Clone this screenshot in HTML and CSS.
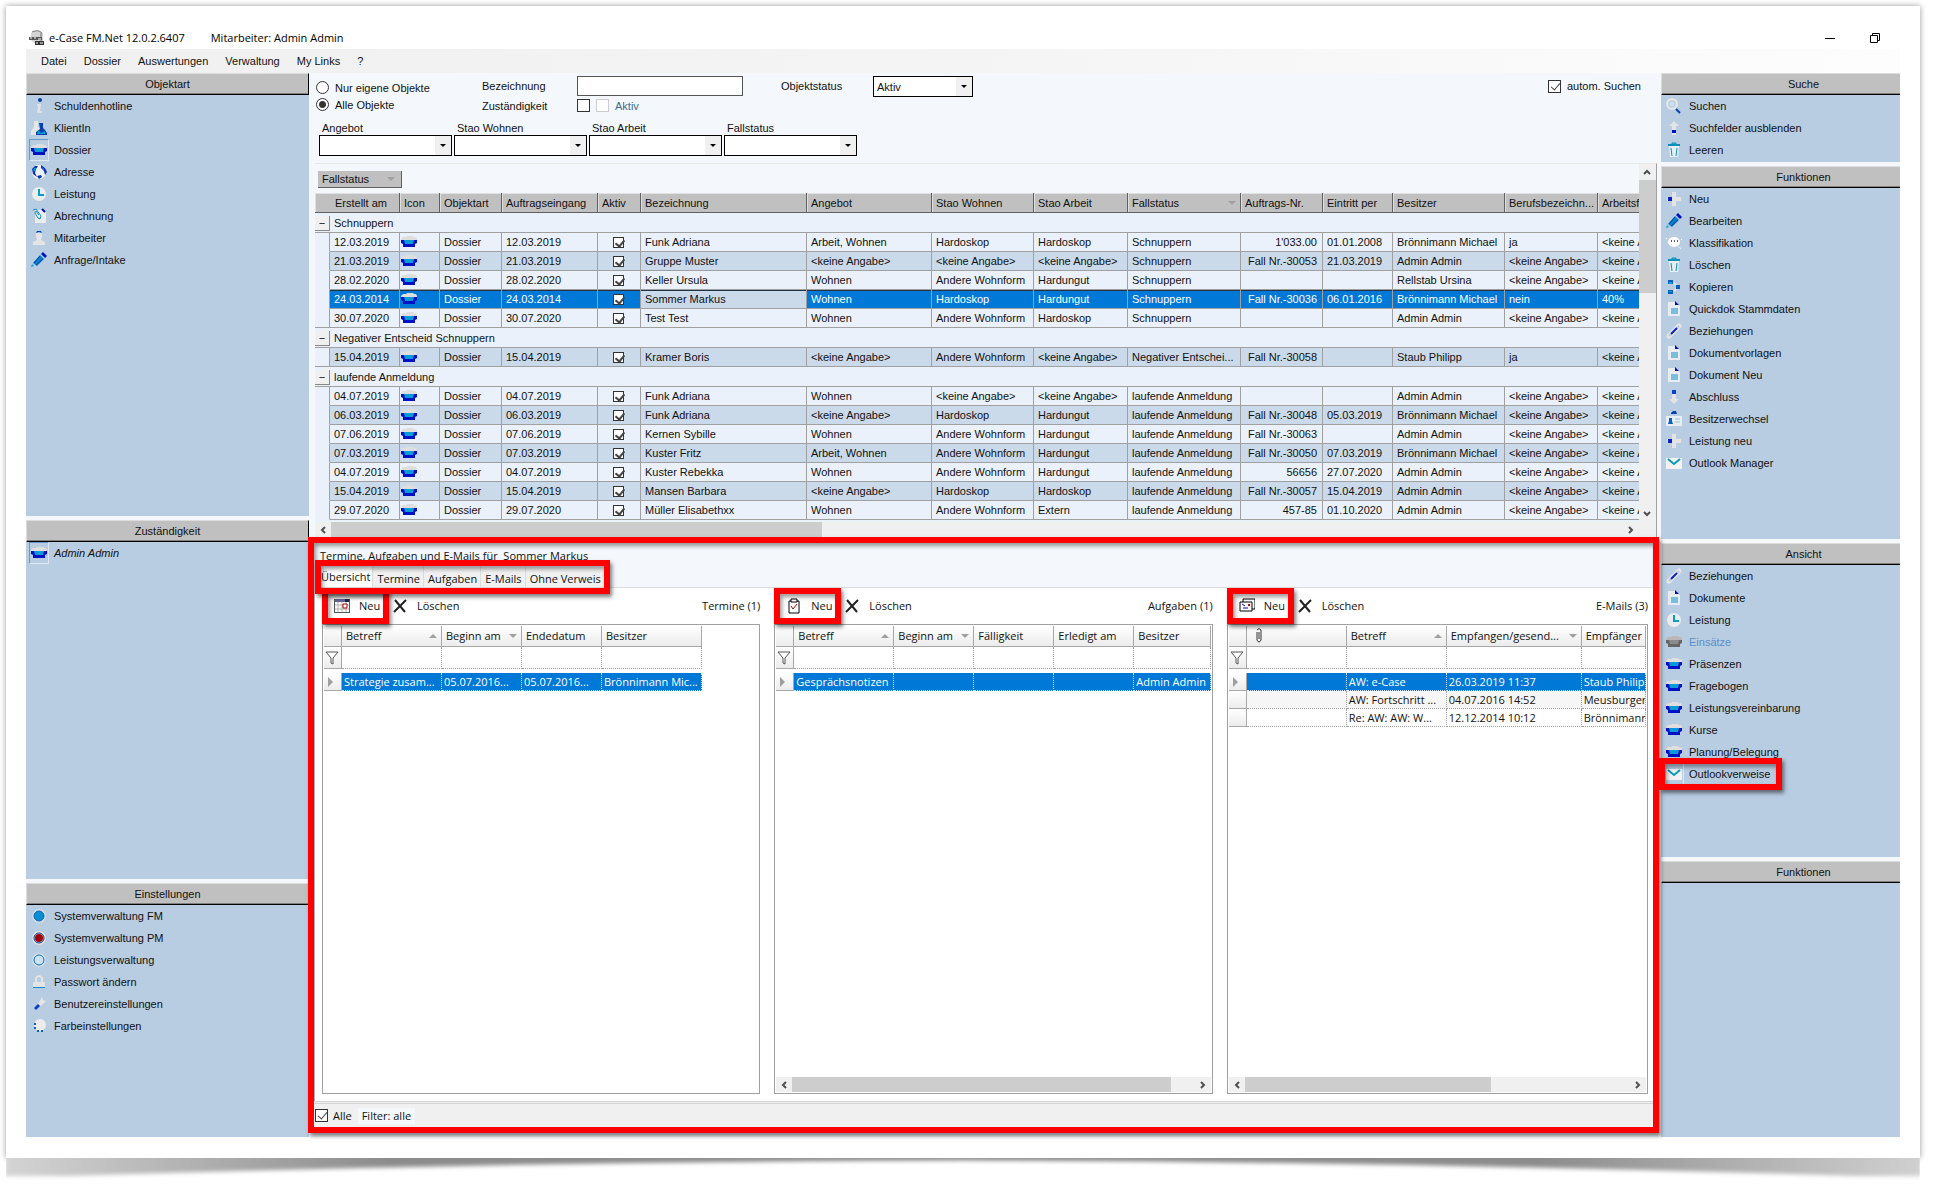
FILE: index.html
```
<!DOCTYPE html>
<html lang="de">
  <head>
    <meta charset="utf-8">
    <title>e-Case FM.Net</title>
    <meta name="viewport" content="width=device-width, initial-scale=1">
    <link rel="stylesheet" href="styles.css">
  </head>
  <body>
    <!-- icon set, all 16x16 -->
    <svg class="sprite" width="0" height="0" aria-hidden="true">
      <symbol id="i-info" viewBox="0 0 16 16"><circle cx="9" cy="2" r="2" fill="#0a3fb0"/><path d="M6 6h4L9 13h2v2H6l1-7H6z" fill="#dfe3e8"/></symbol>
      <symbol id="i-client" viewBox="0 0 16 16"><path d="M3 1h4v5l2 3v6H0v-4l3-4z" fill="#e6e6e6"/><path d="M8 3h4v5l2 2 2 3v2H5v-3l4-3z" fill="#0a3fb0"/><path d="M7 10l3 3 4-2v3H6z" fill="#00a0d8"/></symbol>
      <symbol id="i-box" viewBox="0 0 16 16"><path d="M0 5l2-2h3l1-1h6l1 1h2l1 2v2H0z" fill="#dedede"/><path d="M0 6h16v3l-2 1v3H2v-3L0 9z" fill="#0010c4"/><path d="M3 6h10l-1 4H4z" fill="#0a9ad6"/></symbol>
      <symbol id="i-boxgrey" viewBox="0 0 16 16"><path d="M0 5l2-2h3l1-1h6l1 1h2l1 2v2H0z" fill="#b8b8b8"/><path d="M0 6h16v3l-2 1v3H2v-3L0 9z" fill="#666"/><path d="M3 6h10l-1 4H4z" fill="#8c8c8c"/></symbol>
      <symbol id="i-globe" viewBox="0 0 16 16"><circle cx="8" cy="8" r="7" fill="#eef2f5"/><path d="M1 5l3-3h3L5 5 4 9l2 4-4-3zM10 1l4 3 2 4-2 3-1-4-3-3zM6 12l4-1 1 2-3 2z" fill="#0a30b8"/><path d="M3 4l2 0-1 3-2 0zM11 3l2 2v2z" fill="#00a0d8"/></symbol>
      <symbol id="i-clock" viewBox="0 0 16 16"><circle cx="8" cy="8" r="7" fill="#ececec"/><path d="M7 3h2v5h4v2H7z" fill="#00a0c8"/></symbol>
      <symbol id="i-bill" viewBox="0 0 16 16"><path d="M4 2h8l3 3v10H4z" fill="#ececec"/><path d="M2 2l3-1 5 7-1 3-2-1-3-5 1-2 3 4" fill="none" stroke="#0a90c8"/><path d="M11 1l3 3" stroke="#0010a0" stroke-width="2"/></symbol>
      <symbol id="i-staff" viewBox="0 0 16 16"><path d="M5 3h6v4l-1 3 4 2v3H2v-3l4-2-1-3z" fill="#e4e4e4"/><path d="M5 3l1-2h4l1 2-3-1z" fill="#0a3fb0"/></symbol>
      <symbol id="i-pencil" viewBox="0 0 16 16"><path d="M2 11l7-8 4 4-7 7z" fill="#0a80c8"/><path d="M3 11l6-7M5 13l7-6" stroke="#0040b0" fill="none"/><path d="M10 2l2-2 4 4-2 2z" fill="#0010c4"/><path d="M0 15l1-3 2 2z" fill="#00a0d8"/></symbol>
      <symbol id="i-search" viewBox="0 0 16 16"><circle cx="6" cy="6" r="5" fill="#cfe2f2" stroke="#e6e6e6" stroke-width="2"/><circle cx="6" cy="6" r="3" fill="none" stroke="#b4c4d0"/><path d="M10 11l4 4" stroke="#0a3fb0" stroke-width="2"/></symbol>
      <symbol id="i-up" viewBox="0 0 16 16"><path d="M8 1l5 5h-3v9H6V6H3z" fill="#e4e4e4"/><path d="M6 10h4v3H6z" fill="#0010c4"/></symbol>
      <symbol id="i-down" viewBox="0 0 16 16"><path d="M8 15l5-5h-3V1H6v9H3z" fill="#e4e4e4"/><path d="M6 1h4v4H6z" fill="#0a3fd0"/></symbol>
      <symbol id="i-trash" viewBox="0 0 16 16"><path d="M3 4h10l-1 11H4z" fill="#e8eef2"/><path d="M2 2h12v2H2z" fill="#0a90b8"/><path d="M6 1h4v1H6zM5 6l1 8M11 6l-1 8" stroke="#0a90b8" fill="none"/></symbol>
      <symbol id="i-plus" viewBox="0 0 16 16"><path d="M6 1h4v5h5v4h-5v5H6v-5H1V6h5z" fill="#e4e4e4"/><path d="M2 6h4v4H2z" fill="#0a20c4"/></symbol>
      <symbol id="i-bubble" viewBox="0 0 16 16"><ellipse cx="8" cy="7" rx="6" ry="5" fill="#fff"/><path d="M5 6h1M8 6h1M11 6h1" stroke="#557" stroke-width="2"/><path d="M11 11l4 2v1zM0 3h1v1H0zM15 4h1v1h-1z" fill="#fff"/></symbol>
      <symbol id="i-copy" viewBox="0 0 16 16"><path d="M2 1h5v4H2zM2 11h5v4H2zM10 6h4v4h-4z" fill="#0a60c0"/><path d="M8 4l2 2M8 12l2-2" stroke="#e8e8e8" stroke-width="2"/><path d="M3 3h3v2H3zM3 12h3v1H3z" fill="#00a0d8"/></symbol>
      <symbol id="i-doc" viewBox="0 0 16 16"><path d="M2 1h8l4 4v10H2z" fill="#e8ecf0"/><path d="M9 0l4 4H9z" fill="#0010a0"/><path d="M5 8h7M5 10h7M5 12h7" stroke="#0a90c8"/></symbol>
      <symbol id="i-link" viewBox="0 0 16 16"><path d="M3 13l4-4M9 7l4-4" stroke="#e6e6e6" stroke-width="5" stroke-linecap="round"/><path d="M3 13l2-2M11 5l2-2" stroke="#b8cce0" stroke-width="2"/><path d="M5 11l6-6" stroke="#0a20c4" stroke-width="2"/></symbol>
      <symbol id="i-owner" viewBox="0 0 16 16"><path d="M0 5h16v10H0z" fill="#e8eef2"/><path d="M5 2l2-2h3l1 3H5z" fill="#0a3fb0"/><path d="M3 7h3v3l1 3H2l1-3z" fill="#0a60c0"/><path d="M9 8h5M9 11h5" stroke="#8fc4e0"/></symbol>
      <symbol id="i-mail" viewBox="0 0 16 16"><path d="M0 3h16v11H0z" fill="#f2f2f2"/><path d="M2 4l6 5 6-5" fill="none" stroke="#0a9ab8" stroke-width="2"/></symbol>
      <symbol id="i-disc" viewBox="0 0 16 16"><circle cx="8" cy="8" r="7" fill="#d4dfea"/><circle cx="8" cy="8" r="5" fill="#0a90d0" stroke="#0a60c0"/></symbol>
      <symbol id="i-discred" viewBox="0 0 16 16"><circle cx="8" cy="8" r="7" fill="#e0e0e0"/><circle cx="8" cy="8" r="5" fill="#cfe2f2" stroke="#0a3f90"/><circle cx="8" cy="8" r="4" fill="#a00000"/></symbol>
      <symbol id="i-ring" viewBox="0 0 16 16"><circle cx="8" cy="8" r="7" fill="#d4dfea"/><circle cx="8" cy="8" r="5" fill="#cfe2f2" stroke="#0a70c0"/></symbol>
      <symbol id="i-lock" viewBox="0 0 16 16"><path d="M5 8V4q3-4 6 0v4" fill="none" stroke="#e4e4e4" stroke-width="2"/><path d="M2 8h12v5H2z" fill="#e4e4e4"/><path d="M2 13h12v1H2z" fill="#0a90c8"/></symbol>
      <symbol id="i-tool" viewBox="0 0 16 16"><path d="M7 8l4-7 1 3 3 1-5 5z" fill="#e4e4e4"/><path d="M3 12l4-4 2 2-4 4z" fill="#0a40c0"/></symbol>
      <symbol id="i-palette" viewBox="0 0 16 16"><circle cx="9" cy="7" r="6" fill="#ececec"/><path d="M3 5h2v2H3zM3 9h2v2H3zM6 12h2v2H6zM10 12h2v2h-2z" fill="#0a60c0"/></symbol>
      <symbol id="i-cal" viewBox="0 0 16 16"><path d="M0 1h16v14H0z" fill="#fff"/><path d="M4 4v11M8 4v11M12 4v11M0 7h16M0 11h16" stroke="#b0b0b0" fill="none"/><path d="M0 1h16v3H0z" fill="#669"/><path d="M11 1h5v3h-5z" fill="#224"/><path d="M0 14h16v1H0zM15 1h1v14h-1zM0 1h1v14H0z" fill="#555"/><path d="M9 6h4v4H9z" fill="#fff" stroke="#b00000"/></symbol>
      <symbol id="i-task" viewBox="0 0 16 16"><path d="M3 3h10v12H3z" fill="#fff" stroke="#000"/><path d="M5 1h6v3H5z" fill="#fff" stroke="#000"/><path d="M5 8l2 3 4-5" fill="none" stroke="#a00000"/></symbol>
      <symbol id="i-mails" viewBox="0 0 16 16"><path d="M4 1h12v10H4z" fill="#fff" stroke="#000"/><path d="M1 4h12v9H1z" fill="#fff" stroke="#000"/><path d="M3 6l3 2M4 10h5" stroke="#00c"/><path d="M9 6h2v2H9z" fill="#c00"/></symbol>
      <symbol id="i-x" viewBox="0 0 16 16"><path d="M3 2l10 12M14 2L2 14" stroke="#222" stroke-width="2"/></symbol>
      <symbol id="i-filter" viewBox="0 0 16 16"><path d="M2 2h12L9 8v6l-2-1V8z" fill="#fff" stroke="#555"/></symbol>
      <symbol id="i-clip" viewBox="0 0 16 16"><path d="M6 4v8q2 4 4 0V2Q8-1 6 2M8 4v7" fill="none" stroke="#333"/></symbol>
      <symbol id="i-chev" viewBox="0 0 16 16"><path d="M10 5L7 8l3 3" fill="none" stroke="#505050" stroke-width="2"/></symbol>
      <symbol id="i-app" viewBox="0 0 16 16"><path d="M2 3q6-5 12 0v12H8l-6-5z" fill="#d4d4d4"/><path d="M3 2q6-3 10 1M12 3v12" stroke="#777" fill="none"/><path d="M0 7h13v3H0z" fill="#555"/><path d="M1 8h2M5 8h2M9 9h3" stroke="#fff"/><path d="M6 11h9v4H6z" fill="#333"/><path d="M7 13h2M11 13h3" stroke="#fff"/></symbol>
    </svg>

    <div class="sheet">
      <header class="titlebar">
        <svg class="icon"><use href="#i-app"/></svg>
        <span class="app-name">e-Case FM.Net 12.0.2.6407</span>
        <span>Mitarbeiter: Admin Admin</span>
        <span class="window-buttons">
          <button type="button" aria-label="Minimieren"><svg viewBox="0 0 12 12"><path d="M1 6.500h10" stroke="#000"/></svg></button>
          <button type="button" aria-label="Wiederherstellen"><svg viewBox="0 0 12 12"><path d="M1.500 3.500h7v7h-7zM3.500 3V1.500h7v7H9" fill="none" stroke="#000"/></svg></button>
        </span>
      </header>
      <nav class="menubar">
        <a href="#">Datei</a>
        <a href="#">Dossier</a>
        <a href="#">Auswertungen</a>
        <a href="#">Verwaltung</a>
        <a href="#">My Links</a>
        <a href="#">?</a>
      </nav>

      <div class="workspace">
        <aside class="side side-left">
          <section class="panel panel-types">
            <h2>Objektart</h2>
            <ul>
              <li><a href="#"><svg class="icon"><use href="#i-info"/></svg>Schuldenhotline</a></li>
              <li><a href="#"><svg class="icon"><use href="#i-client"/></svg>KlientIn</a></li>
              <li><a href="#" class="current"><svg class="icon"><use href="#i-box"/></svg>Dossier</a></li>
              <li><a href="#"><svg class="icon"><use href="#i-globe"/></svg>Adresse</a></li>
              <li><a href="#"><svg class="icon"><use href="#i-clock"/></svg>Leistung</a></li>
              <li><a href="#"><svg class="icon"><use href="#i-bill"/></svg>Abrechnung</a></li>
              <li><a href="#"><svg class="icon"><use href="#i-staff"/></svg>Mitarbeiter</a></li>
              <li><a href="#"><svg class="icon"><use href="#i-pencil"/></svg>Anfrage/Intake</a></li>
            </ul>
          </section>
          <section class="panel panel-owner">
            <h2>Zuständigkeit</h2>
            <ul>
              <li><a href="#" class="current owner"><svg class="icon"><use href="#i-box"/></svg>Admin Admin</a></li>
            </ul>
          </section>
          <section class="panel panel-settings">
            <h2>Einstellungen</h2>
            <ul>
              <li><a href="#"><svg class="icon"><use href="#i-disc"/></svg>Systemverwaltung FM</a></li>
              <li><a href="#"><svg class="icon"><use href="#i-discred"/></svg>Systemverwaltung PM</a></li>
              <li><a href="#"><svg class="icon"><use href="#i-ring"/></svg>Leistungsverwaltung</a></li>
              <li><a href="#"><svg class="icon"><use href="#i-lock"/></svg>Passwort ändern</a></li>
              <li><a href="#"><svg class="icon"><use href="#i-tool"/></svg>Benutzereinstellungen</a></li>
              <li><a href="#"><svg class="icon"><use href="#i-palette"/></svg>Farbeinstellungen</a></li>
            </ul>
          </section>
        </aside>

        <main class="center">
          <form class="search">
            <div class="search-top">
              <div class="scope">
                <label><input type="radio" name="scope">Nur eigene Objekte</label>
                <label><input type="radio" name="scope" checked>Alle Objekte</label>
              </div>
              <div class="fields">
                <label for="bez">Bezeichnung</label>
                <input type="text" id="bez">
                <label for="zust">Zuständigkeit</label>
                <span class="checks">
                  <input type="checkbox" id="zust">
                  <label class="muted"><input type="checkbox" disabled>Aktiv</label>
                </span>
              </div>
              <label class="status-label" for="status">Objektstatus</label>
              <span class="select select-status"><select id="status"><option>Aktiv</option></select></span>
              <label class="auto"><input type="checkbox" checked>autom. Suchen</label>
            </div>
            <div class="search-bottom">
              <label>Angebot<span class="select"><select><option></option></select></span></label>
              <label>Stao Wohnen<span class="select"><select><option></option></select></span></label>
              <label>Stao Arbeit<span class="select"><select><option></option></select></span></label>
              <label>Fallstatus<span class="select"><select><option></option></select></span></label>
            </div>
          </form>

          <section class="list">
            <div class="list-view">
              <div class="group-by"><button type="button">Fallstatus<i class="sort down"></i></button></div>
              <table class="cases">
                <colgroup>
                  <col class="w-ind"><col class="w-date"><col class="w-icon"><col class="w-type"><col class="w-entry"><col class="w-act"><col class="w-name"><col class="w-offer"><col class="w-live"><col class="w-work"><col class="w-state"><col class="w-no"><col class="w-date"><col class="w-owner"><col class="w-job"><col>
                </colgroup>
                <thead>
                  <tr><th colspan="2" class="first">Erstellt am</th><th>Icon</th><th>Objektart</th><th>Auftragseingang</th><th>Aktiv</th><th>Bezeichnung</th><th>Angebot</th><th>Stao Wohnen</th><th>Stao Arbeit</th><th>Fallstatus<i class="sort down"></i></th><th>Auftrags-Nr.</th><th>Eintritt per</th><th>Besitzer</th><th>Berufsbezeichn...</th><th>Arbeitsf</th></tr>
                </thead>
                <tbody>
                  <tr class="group"><td colspan="16"><button type="button">−</button>Schnuppern</td></tr>
                  <tr><td></td><td>12.03.2019</td><td><svg class="icon"><use href="#i-box"/></svg></td><td>Dossier</td><td>12.03.2019</td><td><input type="checkbox" checked></td><td>Funk Adriana</td><td>Arbeit, Wohnen</td><td>Hardoskop</td><td>Hardoskop</td><td>Schnuppern</td><td>1'033.00</td><td>01.01.2008</td><td>Brönnimann Michael</td><td>ja</td><td>&lt;keine Angabe&gt;</td></tr>
                  <tr class="alt"><td></td><td>21.03.2019</td><td><svg class="icon"><use href="#i-box"/></svg></td><td>Dossier</td><td>21.03.2019</td><td><input type="checkbox" checked></td><td>Gruppe Muster</td><td>&lt;keine Angabe&gt;</td><td>&lt;keine Angabe&gt;</td><td>&lt;keine Angabe&gt;</td><td>Schnuppern</td><td>Fall Nr.-30053</td><td>21.03.2019</td><td>Admin Admin</td><td>&lt;keine Angabe&gt;</td><td>&lt;keine Angabe&gt;</td></tr>
                  <tr><td></td><td>28.02.2020</td><td><svg class="icon"><use href="#i-box"/></svg></td><td>Dossier</td><td>28.02.2020</td><td><input type="checkbox" checked></td><td>Keller Ursula</td><td>Wohnen</td><td>Andere Wohnform</td><td>Hardungut</td><td>Schnuppern</td><td></td><td></td><td>Rellstab Ursina</td><td>&lt;keine Angabe&gt;</td><td>&lt;keine Angabe&gt;</td></tr>
                  <tr class="selected"><td></td><td>24.03.2014</td><td><svg class="icon"><use href="#i-box"/></svg></td><td>Dossier</td><td>24.03.2014</td><td><input type="checkbox" checked></td><td class="active-cell">Sommer Markus</td><td>Wohnen</td><td>Hardoskop</td><td>Hardungut</td><td>Schnuppern</td><td>Fall Nr.-30036</td><td>06.01.2016</td><td>Brönnimann Michael</td><td>nein</td><td>40%</td></tr>
                  <tr class="last"><td></td><td>30.07.2020</td><td><svg class="icon"><use href="#i-box"/></svg></td><td>Dossier</td><td>30.07.2020</td><td><input type="checkbox" checked></td><td>Test Test</td><td>Wohnen</td><td>Andere Wohnform</td><td>Hardoskop</td><td>Schnuppern</td><td></td><td></td><td>Admin Admin</td><td>&lt;keine Angabe&gt;</td><td>&lt;keine Angabe&gt;</td></tr>
                  <tr class="group"><td colspan="16"><button type="button">−</button>Negativer Entscheid Schnuppern</td></tr>
                  <tr class="alt last"><td></td><td>15.04.2019</td><td><svg class="icon"><use href="#i-box"/></svg></td><td>Dossier</td><td>15.04.2019</td><td><input type="checkbox" checked></td><td>Kramer Boris</td><td>&lt;keine Angabe&gt;</td><td>Andere Wohnform</td><td>&lt;keine Angabe&gt;</td><td>Negativer Entschei...</td><td>Fall Nr.-30058</td><td></td><td>Staub Philipp</td><td>ja</td><td>&lt;keine Angabe&gt;</td></tr>
                  <tr class="group"><td colspan="16"><button type="button">−</button>laufende Anmeldung</td></tr>
                  <tr><td></td><td>04.07.2019</td><td><svg class="icon"><use href="#i-box"/></svg></td><td>Dossier</td><td>04.07.2019</td><td><input type="checkbox" checked></td><td>Funk Adriana</td><td>Wohnen</td><td>&lt;keine Angabe&gt;</td><td>&lt;keine Angabe&gt;</td><td>laufende Anmeldung</td><td></td><td></td><td>Admin Admin</td><td>&lt;keine Angabe&gt;</td><td>&lt;keine Angabe&gt;</td></tr>
                  <tr class="alt"><td></td><td>06.03.2019</td><td><svg class="icon"><use href="#i-box"/></svg></td><td>Dossier</td><td>06.03.2019</td><td><input type="checkbox" checked></td><td>Funk Adriana</td><td>&lt;keine Angabe&gt;</td><td>Hardoskop</td><td>Hardungut</td><td>laufende Anmeldung</td><td>Fall Nr.-30048</td><td>05.03.2019</td><td>Brönnimann Michael</td><td>&lt;keine Angabe&gt;</td><td>&lt;keine Angabe&gt;</td></tr>
                  <tr><td></td><td>07.06.2019</td><td><svg class="icon"><use href="#i-box"/></svg></td><td>Dossier</td><td>07.06.2019</td><td><input type="checkbox" checked></td><td>Kernen Sybille</td><td>Wohnen</td><td>Andere Wohnform</td><td>Hardungut</td><td>laufende Anmeldung</td><td>Fall Nr.-30063</td><td></td><td>Admin Admin</td><td>&lt;keine Angabe&gt;</td><td>&lt;keine Angabe&gt;</td></tr>
                  <tr class="alt"><td></td><td>07.03.2019</td><td><svg class="icon"><use href="#i-box"/></svg></td><td>Dossier</td><td>07.03.2019</td><td><input type="checkbox" checked></td><td>Kuster Fritz</td><td>Arbeit, Wohnen</td><td>Andere Wohnform</td><td>Hardungut</td><td>laufende Anmeldung</td><td>Fall Nr.-30050</td><td>07.03.2019</td><td>Brönnimann Michael</td><td>&lt;keine Angabe&gt;</td><td>&lt;keine Angabe&gt;</td></tr>
                  <tr><td></td><td>04.07.2019</td><td><svg class="icon"><use href="#i-box"/></svg></td><td>Dossier</td><td>04.07.2019</td><td><input type="checkbox" checked></td><td>Kuster Rebekka</td><td>Wohnen</td><td>Andere Wohnform</td><td>Hardungut</td><td>laufende Anmeldung</td><td>56656</td><td>27.07.2020</td><td>Admin Admin</td><td>&lt;keine Angabe&gt;</td><td>&lt;keine Angabe&gt;</td></tr>
                  <tr class="alt"><td></td><td>15.04.2019</td><td><svg class="icon"><use href="#i-box"/></svg></td><td>Dossier</td><td>15.04.2019</td><td><input type="checkbox" checked></td><td>Mansen Barbara</td><td>&lt;keine Angabe&gt;</td><td>Hardoskop</td><td>Hardoskop</td><td>laufende Anmeldung</td><td>Fall Nr.-30057</td><td>15.04.2019</td><td>Admin Admin</td><td>&lt;keine Angabe&gt;</td><td>&lt;keine Angabe&gt;</td></tr>
                  <tr><td></td><td>29.07.2020</td><td><svg class="icon"><use href="#i-box"/></svg></td><td>Dossier</td><td>29.07.2020</td><td><input type="checkbox" checked></td><td>Müller Elisabethxx</td><td>Wohnen</td><td>Andere Wohnform</td><td>Extern</td><td>laufende Anmeldung</td><td>457-85</td><td>01.10.2020</td><td>Admin Admin</td><td>&lt;keine Angabe&gt;</td><td>&lt;keine Angabe&gt;</td></tr>
                </tbody>
              </table>
            </div>
            <div class="vscroll"><svg class="icon up"><use href="#i-chev"/></svg><span class="thumb"></span><svg class="icon dn"><use href="#i-chev"/></svg></div>
            <div class="hscroll hscroll-list"><svg class="icon"><use href="#i-chev"/></svg><span class="track"><span class="thumb"></span></span><svg class="icon rt"><use href="#i-chev"/></svg></div>
          </section>

          <section class="details">
            <h3>Termine, Aufgaben und E-Mails für&nbsp; Sommer Markus</h3>
            <div class="tabs mark" role="tablist">
              <button type="button" class="tab on">Übersicht</button>
              <button type="button" class="tab">Termine</button>
              <button type="button" class="tab">Aufgaben</button>
              <button type="button" class="tab">E-Mails</button>
              <button type="button" class="tab">Ohne Verweis</button>
            </div>
            <div class="page">
              <section class="box">
                <div class="toolbar">
                  <button type="button" class="new mark"><svg class="icon"><use href="#i-cal"/></svg>Neu</button>
                  <button type="button" class="delete"><svg class="icon"><use href="#i-x"/></svg>Löschen</button>
                  <span class="count">Termine (1)</span>
                </div>
                <div class="box-body">
                  <table class="mini mini-dates">
                    <colgroup><col class="m-ind"><col class="m-subj"><col class="m-date"><col class="m-date"><col class="m-subj"></colgroup>
                    <thead>
                      <tr><th></th><th>Betreff<i class="sort"></i></th><th>Beginn am<i class="sort down"></i></th><th>Endedatum</th><th>Besitzer</th></tr>
                      <tr class="filter"><th><svg class="icon"><use href="#i-filter"/></svg></th><td></td><td></td><td></td><td></td></tr>
                    </thead>
                    <tbody>
                      <tr class="selected"><th><i class="play"></i></th><td>Strategie zusam...</td><td>05.07.2016...</td><td>05.07.2016...</td><td>Brönnimann Mic...</td></tr>
                    </tbody>
                  </table>
                </div>
              </section>
              <section class="box">
                <div class="toolbar">
                  <button type="button" class="new mark"><svg class="icon"><use href="#i-task"/></svg>Neu</button>
                  <button type="button" class="delete"><svg class="icon"><use href="#i-x"/></svg>Löschen</button>
                  <span class="count">Aufgaben (1)</span>
                </div>
                <div class="box-body">
                  <table class="mini">
                    <colgroup><col class="m-ind"><col class="m-subj"><col class="m-date"><col class="m-date"><col class="m-date"><col></colgroup>
                    <thead>
                      <tr><th></th><th>Betreff<i class="sort"></i></th><th>Beginn am<i class="sort down"></i></th><th>Fälligkeit</th><th>Erledigt am</th><th>Besitzer</th></tr>
                      <tr class="filter"><th><svg class="icon"><use href="#i-filter"/></svg></th><td></td><td></td><td></td><td></td><td></td></tr>
                    </thead>
                    <tbody>
                      <tr class="selected"><th><i class="play"></i></th><td>Gesprächsnotizen</td><td></td><td></td><td></td><td>Admin Admin</td></tr>
                    </tbody>
                  </table>
                  <div class="hscroll hscroll-tasks"><svg class="icon"><use href="#i-chev"/></svg><span class="track"><span class="thumb"></span></span><svg class="icon rt"><use href="#i-chev"/></svg></div>
                </div>
              </section>
              <section class="box">
                <div class="toolbar">
                  <button type="button" class="new mark"><svg class="icon"><use href="#i-mails"/></svg>Neu</button>
                  <button type="button" class="delete"><svg class="icon"><use href="#i-x"/></svg>Löschen</button>
                  <span class="count">E-Mails (3)</span>
                </div>
                <div class="box-body">
                  <table class="mini">
                    <colgroup><col class="m-ind"><col class="m-subj"><col class="m-subj"><col class="m-sent"><col></colgroup>
                    <thead>
                      <tr><th></th><th><svg class="icon"><use href="#i-clip"/></svg></th><th>Betreff<i class="sort"></i></th><th>Empfangen/gesend...<i class="sort down"></i></th><th>Empfänger</th></tr>
                      <tr class="filter"><th><svg class="icon"><use href="#i-filter"/></svg></th><td></td><td></td><td></td><td></td></tr>
                    </thead>
                    <tbody>
                      <tr class="selected"><th><i class="play"></i></th><td></td><td>AW: e-Case</td><td>26.03.2019 11:37</td><td>Staub Philipp</td></tr>
                      <tr class="odd"><th></th><td></td><td>AW: Fortschritt ...</td><td>04.07.2016 14:52</td><td>Meusburger E</td></tr>
                      <tr><th></th><td></td><td>Re: AW: AW: W...</td><td>12.12.2014 10:12</td><td>Brönnimann M</td></tr>
                    </tbody>
                  </table>
                  <div class="hscroll hscroll-mails"><svg class="icon"><use href="#i-chev"/></svg><span class="track"><span class="thumb"></span></span><svg class="icon rt"><use href="#i-chev"/></svg></div>
                </div>
              </section>
            </div>
            <footer class="statusbar">
              <label><input type="checkbox" checked>Alle</label>
              <span>Filter: alle</span>
            </footer>
          </section>
        </main>

        <aside class="side side-right">
          <section class="panel panel-search">
            <h2>Suche</h2>
            <ul>
              <li><a href="#"><svg class="icon"><use href="#i-search"/></svg>Suchen</a></li>
              <li><a href="#"><svg class="icon"><use href="#i-up"/></svg>Suchfelder ausblenden</a></li>
              <li><a href="#"><svg class="icon"><use href="#i-trash"/></svg>Leeren</a></li>
            </ul>
          </section>
          <section class="panel panel-actions">
            <h2>Funktionen</h2>
            <ul>
              <li><a href="#"><svg class="icon"><use href="#i-plus"/></svg>Neu</a></li>
              <li><a href="#"><svg class="icon"><use href="#i-pencil"/></svg>Bearbeiten</a></li>
              <li><a href="#"><svg class="icon"><use href="#i-bubble"/></svg>Klassifikation</a></li>
              <li><a href="#"><svg class="icon"><use href="#i-trash"/></svg>Löschen</a></li>
              <li><a href="#"><svg class="icon"><use href="#i-copy"/></svg>Kopieren</a></li>
              <li><a href="#"><svg class="icon"><use href="#i-doc"/></svg>Quickdok Stammdaten</a></li>
              <li><a href="#"><svg class="icon"><use href="#i-link"/></svg>Beziehungen</a></li>
              <li><a href="#"><svg class="icon"><use href="#i-doc"/></svg>Dokumentvorlagen</a></li>
              <li><a href="#"><svg class="icon"><use href="#i-doc"/></svg>Dokument Neu</a></li>
              <li><a href="#"><svg class="icon"><use href="#i-down"/></svg>Abschluss</a></li>
              <li><a href="#"><svg class="icon"><use href="#i-owner"/></svg>Besitzerwechsel</a></li>
              <li><a href="#"><svg class="icon"><use href="#i-plus"/></svg>Leistung neu</a></li>
              <li><a href="#"><svg class="icon"><use href="#i-mail"/></svg>Outlook Manager</a></li>
            </ul>
          </section>
          <section class="panel panel-views">
            <h2>Ansicht</h2>
            <ul>
              <li><a href="#"><svg class="icon"><use href="#i-link"/></svg>Beziehungen</a></li>
              <li><a href="#"><svg class="icon"><use href="#i-doc"/></svg>Dokumente</a></li>
              <li><a href="#"><svg class="icon"><use href="#i-clock"/></svg>Leistung</a></li>
              <li><a href="#" class="off"><svg class="icon"><use href="#i-boxgrey"/></svg>Einsätze</a></li>
              <li><a href="#"><svg class="icon"><use href="#i-box"/></svg>Präsenzen</a></li>
              <li><a href="#"><svg class="icon"><use href="#i-box"/></svg>Fragebogen</a></li>
              <li><a href="#"><svg class="icon"><use href="#i-box"/></svg>Leistungsvereinbarung</a></li>
              <li><a href="#"><svg class="icon"><use href="#i-box"/></svg>Kurse</a></li>
              <li><a href="#"><svg class="icon"><use href="#i-box"/></svg>Planung/Belegung</a></li>
              <li><a href="#" class="current mark"><svg class="icon"><use href="#i-mail"/></svg>Outlookverweise</a></li>
            </ul>
          </section>
          <section class="panel panel-more">
            <h2>Funktionen</h2>
          </section>
        </aside>
      </div>
    </div>

    <!-- lifted paper shadow -->
    <svg class="curl" viewBox="0 0 1914 28" preserveAspectRatio="none" aria-hidden="true">
      <defs>
        <linearGradient id="curl-fill">
          <stop offset="0" stop-color="#d4d4d4"/>
          <stop offset=".2" stop-color="#8c8c8c"/>
          <stop offset=".5" stop-color="#909090"/>
          <stop offset=".8" stop-color="#8c8c8c"/>
          <stop offset="1" stop-color="#d0d0d0"/>
        </linearGradient>
        <filter id="curl-blur" x="-1%" y="-40%" width="102%" height="180%"><feGaussianBlur stdDeviation="1 2"/></filter>
      </defs>
      <path d="M0-6H1914V18H1850Q1400 4 957 2Q500 4 60 18H0z" fill="url(#curl-fill)" filter="url(#curl-blur)"/>
    </svg>
  </body>
</html>
```
FILE: styles.css
```
* {
  box-sizing: border-box;
}

body {
  margin: 0;
  background-color: #fff;
  color: #111;
  font: 11px/16px "Liberation Sans", Arial, sans-serif;
}

button, input, select {
  margin: 0;
  padding: 0;
  font: inherit;
  color: inherit;
}

button {
  border: none;
  background: none;
  cursor: pointer;
}

a {
  color: inherit;
  text-decoration: none;
}

.sprite {
  position: absolute;
}

.icon {
  width: 16px;
  height: 16px;
  flex: none;
  display: block;
}

.sheet {
  display: flex;
  flex-direction: column;
  min-height: calc(100vh - 34px);
  margin: 6px 14px 0 6px;
  padding: 20px 20px 21px;
  background-color: #fff;
  box-shadow: 0 0 6px rgba(0, 0, 0, 0.4);
  position: relative;
  z-index: 1;
}

.curl {
  display: block;
  width: calc(100% - 20px);
  height: 28px;
  margin-left: 6px;
  position: relative;
  z-index: 1;
}

/* title bar and menu */
.titlebar {
  display: flex;
  align-items: center;
  height: 23px;
  padding-left: 3px;
  font: 11px/16px "Open Sans", sans-serif;
  color: #000;
}

.app-name {
  margin: 0 26px 0 4px;
}

.window-buttons {
  display: flex;
  gap: 33px;
  margin-left: auto;
  padding-right: 19px;
}

.window-buttons svg {
  display: block;
  width: 12px;
  height: 12px;
}

.menubar {
  display: flex;
  align-items: center;
  gap: 17px;
  height: 24px;
  padding-left: 15px;
  background: linear-gradient(to right, #f0f0f0, #f4f4f4 50%, #fdfdfd);
}

.workspace {
  display: flex;
  flex: 1;
}

/* side panels */
.side {
  display: flex;
  flex-direction: column;
  gap: 4px;
  flex: none;
  background-color: #f4f8fc;
}

.side-left {
  width: 283px;
}

.side-right {
  width: 239px;
}

.panel {
  background-color: #b8cce2;
}

.panel-types { flex: 443 1 0; }
.panel-owner { flex: 359 1 0; }
.panel-settings { flex: 254 1 0; }
.panel-search { flex: 89 1 0; }
.panel-actions { flex: 373 1 0; }
.panel-views { flex: 314 1 0; }
.panel-more { flex: 276 1 0; }

.panel h2 {
  height: 22px;
  margin: 0;
  background-color: #c0c0c0;
  border-top: 1px solid #dcdcdc;
  border-left: 1px solid #dcdcdc;
  border-bottom: 1px solid #000;
  box-shadow: inset 0 -1px #808080;
  font: inherit;
  line-height: 20px;
  text-align: center;
}

.side-left h2 {
  border-right: 1px solid #000;
}

.side-right h2 {
  padding-left: 45px;
}

.panel ul {
  margin: 0;
  padding: 0 0 0 3px;
  list-style: none;
}

.panel li {
  display: flex;
}

.panel a {
  display: flex;
  align-items: center;
  gap: 5px;
  height: 22px;
}

.panel .icon {
  width: 20px;
  height: 22px;
  padding: 2px 1px;
  border: 1px solid transparent;
}

.panel .current .icon {
  border-color: #6a96cc #dfe9f4 #dfe9f4 #6a96cc;
}

.panel .owner {
  font-style: italic;
}

.panel .off {
  color: #5b8fc9;
}

/* red markers */
.mark {
  position: relative;
}

.mark::after {
  content: "";
  position: absolute;
  inset: 0;
  border: 6px solid #f00;
  box-shadow: 2px 3px 4px rgba(0, 0, 0, 0.5), inset 2px 3px 4px rgba(0, 0, 0, 0.4);
  pointer-events: none;
  z-index: 2;
}

.panel .mark {
  padding-right: 12px;
}

.panel .mark::after {
  inset: -5px 0 -5px -5px;
}

/* search form */
.center {
  display: flex;
  flex-direction: column;
  flex: 1;
  min-width: 0;
  background-color: #f4f8fc;
}

.search {
  height: 90px;
  padding: 3px 20px 0 7px;
}

.search-top {
  display: flex;
  align-items: flex-start;
}

.search label {
  display: flex;
  align-items: center;
}

.scope {
  width: 166px;
  padding-top: 3px;
}

.scope label {
  height: 17px;
  gap: 6px;
}

input[type="radio"], input[type="checkbox"] {
  appearance: none;
  flex: none;
  width: 13px;
  height: 13px;
  background-color: #fff;
  border: 1px solid #333;
}

input[type="radio"] {
  border-radius: 50%;
}

input[type="radio"]:checked {
  background: radial-gradient(circle, #333 0 3px, #fff 4px);
}

input[type="checkbox"]:checked::before {
  content: "";
  display: block;
  width: 4px;
  height: 8px;
  margin: 0 0 0 4px;
  border: solid #444;
  border-width: 0 1px 1px 0;
  transform: rotate(40deg);
}

input[type="checkbox"]:disabled {
  border-color: #ccc;
}

.fields {
  display: grid;
  grid-template-columns: 95px 166px;
  grid-template-rows: 20px 19px;
}

.fields input[type="text"] {
  width: 166px;
  height: 20px;
  border: 1px solid #555;
  background-color: #fff;
}

.checks {
  display: flex;
  align-items: center;
  gap: 6px;
}

.checks label {
  gap: 6px;
}

.search .muted {
  color: #3f6d8f;
}

.search .status-label {
  height: 20px;
  width: 92px;
  margin-left: 38px;
}

.search .auto {
  gap: 6px;
  height: 20px;
  margin-left: auto;
}

.select {
  display: block;
  position: relative;
  width: 133px;
  height: 21px;
  text-indent: 0;
}

.select-status {
  width: 100px;
}

.select select {
  appearance: none;
  width: 100%;
  height: 100%;
  padding-left: 3px;
  border: 1px solid #000;
  border-radius: 0;
  background: linear-gradient(#f0f0f0, #f0f0f0) right / 16px 100% no-repeat #fff;
}

.select::after {
  content: "";
  position: absolute;
  right: 6px;
  top: 9px;
  border: 3px solid transparent;
  border-top-color: #000;
  border-bottom: none;
}

.search-bottom {
  display: flex;
  gap: 2px;
  margin-top: 6px;
  padding-left: 3px;
}

.search .search-bottom label {
  flex-direction: column;
  align-items: flex-start;
  line-height: 14px;
  text-indent: 3px;
}

/* case list */
.list {
  display: grid;
  grid-template-columns: 1fr 17px;
  grid-template-rows: 1fr 15px;
  height: 374px;
  margin: 0 4px 0 6px;
  border-top: 1px solid #e8e8e8;
  border-right: 1px solid #a0a0a0;
}

.list-view {
  overflow: hidden;
  background-color: #eaf1fa;
}

.group-by {
  height: 29px;
  padding: 7px 0 0 3px;
  background-color: #f4f8fc;
}

.group-by button {
  display: flex;
  align-items: center;
  justify-content: space-between;
  width: 84px;
  height: 17px;
  padding: 0 6px 0 4px;
  background-color: #c0c0c0;
  border: solid #606060;
  border-width: 0 1px 1px 0;
}

.sort {
  border: 4px solid transparent;
  border-bottom-color: #a0a0a0;
  border-top: none;
}

.sort.down {
  border: 4px solid transparent;
  border-top-color: #a0a0a0;
  border-bottom: none;
}

table {
  table-layout: fixed;
  border-collapse: separate;
  border-spacing: 0;
}

th .sort {
  float: right;
  margin: 6px 4px 0 0;
}

.cases {
  width: 100%;
}

.w-ind { width: 15px; }
.w-date { width: 70px; }
.w-icon { width: 40px; }
.w-type { width: 62px; }
.w-entry { width: 96px; }
.w-act { width: 43px; }
.w-name { width: 166px; }
.w-offer { width: 125px; }
.w-live { width: 102px; }
.w-work { width: 94px; }
.w-state { width: 113px; }
.w-no { width: 82px; }
.w-owner { width: 112px; }
.w-job { width: 93px; }

.cases th {
  height: 20px;
  padding: 0 0 0 4px;
  background-color: #c0c0c0;
  border: solid #606060;
  border-width: 0 1px 1px 0;
  box-shadow: inset 1px 1px #e0e0e0;
  font-weight: normal;
  text-align: left;
  white-space: nowrap;
  overflow: hidden;
}

.cases th.first {
  padding-left: 20px;
}

.cases td {
  height: 19px;
  padding: 0 0 0 4px;
  border: solid #a0a0a0;
  border-width: 0 1px 1px 0;
  background-color: #eaf1fa;
  white-space: nowrap;
  overflow: hidden;
}

.cases td:nth-child(12) {
  padding-right: 5px;
  text-align: right;
}

.cases td:first-child {
  border-bottom-color: transparent;
}

.cases .last td:first-child {
  border-bottom-color: #a0a0a0;
}

.cases .icon {
  margin-left: -3px;
}

.cases input[type="checkbox"] {
  display: block;
  width: 11px;
  height: 11px;
  margin-left: 11px;
}

.cases input[type="checkbox"]::before {
  height: 7px;
  width: 4px;
  margin-left: 3px;
  border-width: 0 2px 2px 0;
}

.cases .alt td + td {
  background-color: #cbdaea;
}

.cases .group td {
  height: 20px;
  padding: 0;
  border-right: none;
  border-bottom-color: #a0a0a0;
}

.group button {
  width: 15px;
  height: 15px;
  margin: 0 4px 0 0;
  background-color: #f0f0f0;
  border: solid #888;
  border-width: 0 1px 1px 0;
  line-height: 12px;
}

.cases .selected td + td {
  background-color: #0078d7;
  color: #fff;
  box-shadow: inset 0 1px #234;
}

.cases .selected td.active-cell {
  background-color: #cbdaea;
  color: #111;
}

.cases td:last-child, .cases th:last-child {
  border-right: none;
}

/* scroll bars */
.vscroll {
  display: flex;
  flex-direction: column;
  background-color: #f0f0f0;
}

.vscroll .thumb {
  flex: 112 1 0;
  background-color: #cdcdcd;
}

.vscroll::after {
  content: "";
  flex: 212 1 0;
}

.vscroll .dn {
  order: 1;
}

.up {
  transform: rotate(90deg);
}

.dn {
  transform: rotate(-90deg);
}

.rt {
  transform: rotate(180deg);
}

.hscroll {
  display: flex;
  align-items: center;
  height: 15px;
  background-color: #f0f0f0;
}

.hscroll .track {
  flex: 1;
  height: 15px;
}

.hscroll .thumb {
  display: block;
  height: 15px;
  background-color: #cdcdcd;
}

.hscroll-list {
  grid-column: 1 / 3;
  padding-right: 17px;
}

.hscroll-list .thumb { width: 38%; }
.hscroll-tasks .thumb { width: 94%; }
.hscroll-mails .thumb { width: 64%; }

/* appointments, tasks and mails */
.details {
  display: flex;
  flex-direction: column;
  flex: 1;
  margin: 0 2px 4px -1px;
  border: 6px solid #f00;
  box-shadow: 2px 3px 4px rgba(0, 0, 0, 0.5), inset 2px 3px 4px rgba(0, 0, 0, 0.4);
  position: relative;
  z-index: 1;
  font-family: "Open Sans", sans-serif;
}

.details h3 {
  height: 24px;
  margin: 0;
  padding-left: 6px;
  font: inherit;
  line-height: 26px;
}

.tabs {
  display: flex;
  align-self: flex-start;
  height: 20px;
  margin-left: 6px;
}

.tabs.mark::after {
  inset: -7px -5px -7px -5px;
  z-index: 3;
}

.tab {
  padding: 3px 3px 0 4px;
  background-color: #f0f0f0;
  border-right: 1px solid #dcdcdc;
  white-space: nowrap;
}

.tab.on {
  padding: 0 2px 0 1px;
  background-color: #fff;
}

.page {
  display: grid;
  grid-template-columns: 438fr 438fr 421fr;
  gap: 14px;
  flex: 1;
  margin-left: 1px;
  padding: 0 5px 7px 7px;
  background-color: #fff;
  border-top: 1px solid #dcdcdc;
}

.box {
  display: flex;
  flex-direction: column;
  min-width: 0;
}

.toolbar {
  display: flex;
  align-items: center;
  height: 36px;
}

.toolbar button {
  display: flex;
  align-items: center;
  height: 36px;
}

.new {
  width: 67px;
  padding-left: 12px;
  gap: 9px;
}

.toolbar .delete {
  padding-left: 3px;
  gap: 9px;
}

.count {
  margin-left: auto;
}

.box-body {
  display: flex;
  flex-direction: column;
  flex: 1;
  padding: 1px;
  border: 1px solid #a0a0a0;
}

.box-body .hscroll {
  margin-top: auto;
}

.mini {
  width: 100%;
}

.mini-dates {
  width: 378px;
}

.m-ind { width: 18px; }
.m-subj { width: 100px; }
.m-date { width: 80px; }
.m-sent { width: 135px; }

.mini th {
  padding: 0 0 0 4px;
  background: linear-gradient(#fff, #ececec);
  border: solid #a8a8a8;
  border-width: 0 1px 1px 0;
  font-weight: normal;
  text-align: left;
  white-space: nowrap;
  overflow: hidden;
}

.mini tr:first-child th {
  height: 21px;
}

.mini td {
  height: 18px;
  padding: 0 0 0 2px;
  border: dotted #a0a0a0;
  border-width: 0 1px 1px 0;
  line-height: 16px;
  white-space: nowrap;
  overflow: hidden;
}

.mini .filter th {
  padding: 0;
}

.mini .filter td, .mini .filter th {
  height: 22px;
}

.mini tbody::before {
  content: "";
  display: table-row;
  height: 4px;
}

.mini tbody tr:first-child th {
  height: 18px;
}

.mini .selected td {
  background-color: #0078d7;
  border-color: #d0e4f5;
  color: #fff;
}

.mini .odd td {
  background-color: #f6f6f6;
}

.play {
  display: block;
  width: 5px;
  border: 5px solid transparent;
  border-left-color: #a0a0a0;
  border-right: none;
}

.statusbar {
  display: flex;
  align-items: center;
  height: 26px;
  padding-left: 1px;
  background-color: #f0f0f0;
  border-top: 3px double #d4d4d4;
}

.statusbar label {
  display: flex;
  align-items: center;
  gap: 5px;
  margin-right: 6px;
}

.statusbar span {
  padding: 0 4px;
  background-color: #f4f8fc;
}
```
